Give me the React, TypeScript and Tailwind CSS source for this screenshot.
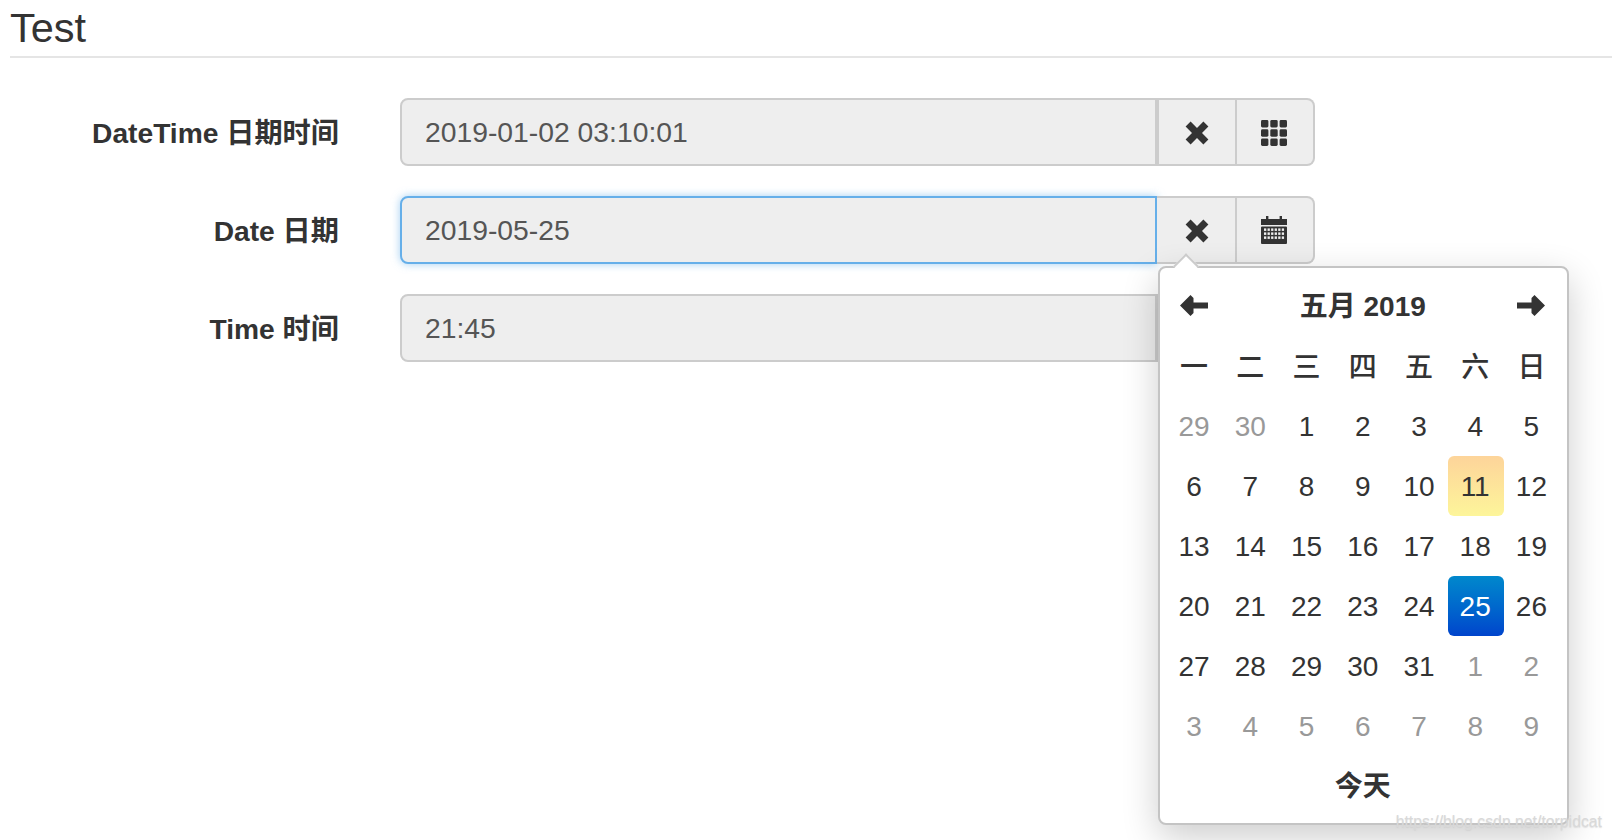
const weekdays = ["一", "二", "三", "四", "五", "六", "日"];

const days = [
  29, 30, 1, 2, 3, 4, 5,
  6, 7, 8, 9, 10, 11, 12,
  13, 14, 15, 16, 17, 18, 19,
  20, 21, 22, 23, 24, 25, 26,
  27, 28, 29, 30, 31, 1, 2,
  3, 4, 5, 6, 7, 8, 9,
];

function RemoveIcon() {
  return (
    <svg className="w-[24px] h-[24px] mt-[1px] text-[#333]" viewBox="0 0 24 24" fill="currentColor">
      <path d="M5.6 0.6 12 7l6.4-6.4 5 5L17 12l6.4 6.4-5 5L12 17l-6.4 6.4-5-5L7 12 0.6 5.6z" />
    </svg>
  );
}

function GridIcon() {
  return (
    <svg className="w-[26px] h-[26px] mt-[2px] text-[#333]" viewBox="0 0 26 26" fill="currentColor">
      <rect x="0" y="0" width="7.4" height="7.4" rx="1.4" />
      <rect x="9.3" y="0" width="7.4" height="7.4" rx="1.4" />
      <rect x="18.6" y="0" width="7.4" height="7.4" rx="1.4" />
      <rect x="0" y="9.3" width="7.4" height="7.4" rx="1.4" />
      <rect x="9.3" y="9.3" width="7.4" height="7.4" rx="1.4" />
      <rect x="18.6" y="9.3" width="7.4" height="7.4" rx="1.4" />
      <rect x="0" y="18.6" width="7.4" height="7.4" rx="1.4" />
      <rect x="9.3" y="18.6" width="7.4" height="7.4" rx="1.4" />
      <rect x="18.6" y="18.6" width="7.4" height="7.4" rx="1.4" />
    </svg>
  );
}

function CalendarIcon() {
  const cells = [];
  for (let r = 0; r < 3; r++) {
    for (let c = 0; c < 6; c++) {
      cells.push(<rect key={r + "-" + c} x={3 + c * 3.55} y={12.4 + r * 4} width="2.3" height="2.5" fill="#eee" />);
    }
  }
  return (
    <svg className="w-[26px] h-[28px] text-[#333]" viewBox="0 0 26 28" fill="currentColor">
      <rect x="5" y="0" width="2.4" height="5" />
      <rect x="18.6" y="0" width="2.4" height="5" />
      <path d="M0 3h26v6H0z" />
      <path d="M1 10.5h24a1 1 0 0 1 1 1V27a1 1 0 0 1-1 1H1a1 1 0 0 1-1-1V11.500a1 1 0 0 1 1-1z" />
      {cells}
    </svg>
  );
}

function ArrowIcon({ right }: { right?: boolean }) {
  return (
    <svg className={right ? "w-[28px] h-[21px] text-[#333] rotate-180 mb-[2px]" : "w-[28px] h-[21px] text-[#333] mb-[2px]"} viewBox="0 0 28 21" fill="currentColor">
      <path d="M0 10.500 10.500 0 13.500 3v4.500H28v6H13.500V18l-3 3z" />
    </svg>
  );
}

function FieldRow({ label, value, focused, icon }: { label: string; value: string; focused?: boolean; icon: React.ReactNode }) {
  return (
    <div className="flex items-center">
      <label className="w-[339px] pt-[2px] text-right text-[28.2px] font-bold text-[#333] whitespace-nowrap">{label}</label>
      <div className="ml-[61px] w-[915px] h-[68px] flex">
        <div
          className={
            focused
              ? "flex-1 flex items-center pl-[23px] pt-[1px] bg-[#eee] text-[28.3px] text-[#555] rounded-l-lg border-2 border-[#66afe9] shadow-[0_0_8px_rgba(102,175,233,0.6)]"
              : "flex-1 flex items-center pl-[23px] pt-[1px] bg-[#eee] text-[28.3px] text-[#555] rounded-l-lg border-2 border-[#ccc]"
          }
        >
          {value}
        </div>
        <button
          className={
            focused
              ? "w-[80px] pl-[2px] flex items-center justify-center bg-[#eee] border-y-2 border-r-2 border-[#ccc]"
              : "w-[80px] flex items-center justify-center bg-[#eee] border-y-2 border-x-2 border-[#ccc]"
          }
        >
          <RemoveIcon />
        </button>
        <button className="w-[78px] pr-[2px] flex items-center justify-center bg-[#eee] border-y-2 border-r-2 border-[#ccc] rounded-r-lg">
          {icon}
        </button>
      </div>
    </div>
  );
}

function DatePopup() {
  return (
    <div className="absolute left-[1158px] top-[266px] w-[411px] h-[559px] bg-white border-2 border-[#c4c4c4] rounded-lg shadow-[0_12px_36px_rgba(0,0,0,0.2)] pt-[8px] pl-[7px]">
      <div className="absolute left-[17px] top-[-11px] w-[18px] h-[18px] rotate-45 bg-white border-l-2 border-t-2 border-[#ccc]" />
      <div className="relative grid grid-cols-7 w-[393.500px] text-[28px] text-[#333]">
        <div className="h-[60px] pr-[2px] flex items-center justify-center"><ArrowIcon /></div>
        <div className="col-span-5 h-[60px] pt-[2px] pr-[2px] flex items-center justify-center font-bold">五月 2019</div>
        <div className="h-[60px] pr-[2px] flex items-center justify-center"><ArrowIcon right /></div>
        {weekdays.map((d) => (
          <div key={d} className="h-[60px] pt-[4px] pr-[2px] flex items-center justify-center font-medium">{d}</div>
        ))}
        {days.map((d, i) => {
          const outside = i < 2 || i >= 33;
          if (i === 12) {
            return (
              <div key={i} className="h-[60px] pt-[2px] pr-[2px] flex items-center justify-center rounded-md bg-gradient-to-b from-[#fdd49a] to-[#fdf59a]">{d}</div>
            );
          }
          if (i === 26) {
            return (
              <div key={i} className="h-[60px] pt-[2px] pr-[2px] flex items-center justify-center rounded-md text-white bg-gradient-to-b from-[#0088cc] to-[#0044cc]">{d}</div>
            );
          }
          return (
            <div key={i} className={outside ? "h-[60px] pt-[2px] pr-[2px] flex items-center justify-center text-[#999]" : "h-[60px] pt-[2px] pr-[2px] flex items-center justify-center"}>{d}</div>
          );
        })}
        <div className="col-span-7 h-[60px] pt-[2px] pr-[2px] flex items-center justify-center font-bold">今天</div>
      </div>
    </div>
  );
}

export default function App() {
  return (
    <div className="relative w-[1612px] h-[840px] overflow-hidden bg-white font-['Liberation_Sans','Noto_Sans_CJK_SC',sans-serif]">
      <div className="ml-[10px] h-[58px] border-b-2 border-[#e5e5e5]">
        <h1 className="text-[41.500px] leading-[56px] text-[#333]">Test</h1>
      </div>
      <div className="mt-[40px] flex flex-col gap-[30px]">
        <FieldRow label="DateTime 日期时间" value="2019-01-02 03:10:01" icon={<GridIcon />} />
        <FieldRow label="Date 日期" value="2019-05-25" focused icon={<CalendarIcon />} />
        <FieldRow label="Time 时间" value="21:45" icon={<CalendarIcon />} />
      </div>
      <DatePopup />
      <div className="absolute right-[10px] bottom-[6px] text-[15.800px] text-[#d9d9d9] [text-shadow:0_1px_1px_rgba(200,200,200,0.5)]">https://blog.csdn.net/torpidcat</div>
    </div>
  );
}
